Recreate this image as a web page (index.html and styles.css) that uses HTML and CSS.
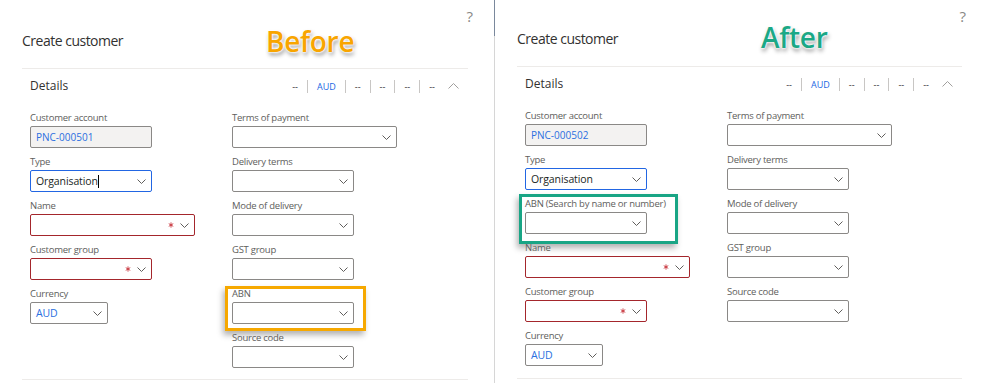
FILE: index.html
```html
<!DOCTYPE html>
<html lang="en">
<head>
  <meta charset="UTF-8" />
  <meta name="viewport" content="width=device-width, initial-scale=1.0"/>
  <title>Create customer - Before / After</title>
  <link rel="stylesheet" href="styles.css">
</head>
<body>
<div class="page">

  <!-- Before -->
  <section class="panel panel-before">
    <div class="topbar"><span class="help">?</span></div>
    <h1 class="title">Create customer</h1>
    <div class="stamp stamp-before">Before</div>

    <div class="card">
      <div class="card-head">
        <h2>Details</h2>
        <div class="summary">
          <span class="sum-item">--</span>
          <span class="sum-item sum-blue">AUD</span>
          <span class="sum-item">--</span>
          <span class="sum-item">--</span>
          <span class="sum-item">--</span>
          <span class="sum-item">--</span>
          <svg class="collapse" viewBox="0 0 11 6"><path d="M0.5 5.5 L5.5 0.5 L10.5 5.5"/></svg>
        </div>
      </div>

      <div class="form">
        <div class="col">
          <div class="field">
            <label>Customer account</label>
            <div class="input w-md readonly"><span class="value blue">PNC-000501</span></div>
          </div>
          <div class="field">
            <label>Type</label>
            <div class="input w-md focused"><span class="value big">Organisation<span class="caret"></span></span>
              <svg class="chev" viewBox="0 0 9 5"><path d="M0.5 0.5 L4.5 4.5 L8.5 0.5"/></svg></div>
          </div>
          <div class="field">
            <label>Name</label>
            <div class="input w-lg required"><span class="value"></span>
              <svg class="req" viewBox="0 0 8 8"><path d="M4 0.5 V7.5 M1 2.2 L7 5.8 M1 5.8 L7 2.2"/></svg>
              <svg class="chev" viewBox="0 0 9 5"><path d="M0.5 0.5 L4.5 4.5 L8.5 0.5"/></svg></div>
          </div>
          <div class="field">
            <label>Customer group</label>
            <div class="input w-md required"><span class="value"></span>
              <svg class="req" viewBox="0 0 8 8"><path d="M4 0.5 V7.5 M1 2.2 L7 5.8 M1 5.8 L7 2.2"/></svg>
              <svg class="chev" viewBox="0 0 9 5"><path d="M0.5 0.5 L4.5 4.5 L8.5 0.5"/></svg></div>
          </div>
          <div class="field">
            <label>Currency</label>
            <div class="input w-sm"><span class="value big blue">AUD</span>
              <svg class="chev" viewBox="0 0 9 5"><path d="M0.5 0.5 L4.5 4.5 L8.5 0.5"/></svg></div>
          </div>
        </div>

        <div class="col">
          <div class="field">
            <label>Terms of payment</label>
            <div class="input w-lg"><span class="value"></span>
              <svg class="chev" viewBox="0 0 9 5"><path d="M0.5 0.5 L4.5 4.5 L8.5 0.5"/></svg></div>
          </div>
          <div class="field">
            <label>Delivery terms</label>
            <div class="input w-md"><span class="value"></span>
              <svg class="chev" viewBox="0 0 9 5"><path d="M0.5 0.5 L4.5 4.5 L8.5 0.5"/></svg></div>
          </div>
          <div class="field">
            <label>Mode of delivery</label>
            <div class="input w-md"><span class="value"></span>
              <svg class="chev" viewBox="0 0 9 5"><path d="M0.5 0.5 L4.5 4.5 L8.5 0.5"/></svg></div>
          </div>
          <div class="field">
            <label>GST group</label>
            <div class="input w-md"><span class="value"></span>
              <svg class="chev" viewBox="0 0 9 5"><path d="M0.5 0.5 L4.5 4.5 L8.5 0.5"/></svg></div>
          </div>
          <div class="field mark mark-orange">
            <label>ABN</label>
            <div class="input w-md"><span class="value"></span>
              <svg class="chev" viewBox="0 0 9 5"><path d="M0.5 0.5 L4.5 4.5 L8.5 0.5"/></svg></div>
          </div>
          <div class="field">
            <label>Source code</label>
            <div class="input w-md"><span class="value"></span>
              <svg class="chev" viewBox="0 0 9 5"><path d="M0.5 0.5 L4.5 4.5 L8.5 0.5"/></svg></div>
          </div>
        </div>
      </div>
    </div>
  </section>

  <!-- After -->
  <section class="panel panel-after">
    <div class="topbar"><span class="help">?</span></div>
    <h1 class="title">Create customer</h1>
    <div class="stamp stamp-after">After</div>

    <div class="card">
      <div class="card-head">
        <h2>Details</h2>
        <div class="summary">
          <span class="sum-item">--</span>
          <span class="sum-item sum-blue">AUD</span>
          <span class="sum-item">--</span>
          <span class="sum-item">--</span>
          <span class="sum-item">--</span>
          <span class="sum-item">--</span>
          <svg class="collapse" viewBox="0 0 11 6"><path d="M0.5 5.5 L5.5 0.5 L10.5 5.5"/></svg>
        </div>
      </div>

      <div class="form">
        <div class="col">
          <div class="field">
            <label>Customer account</label>
            <div class="input w-md readonly"><span class="value blue">PNC-000502</span></div>
          </div>
          <div class="field">
            <label>Type</label>
            <div class="input w-md focused"><span class="value big">Organisation</span>
              <svg class="chev" viewBox="0 0 9 5"><path d="M0.5 0.5 L4.5 4.5 L8.5 0.5"/></svg></div>
          </div>
          <div class="field mark mark-green">
            <label>ABN (Search by name or number)</label>
            <div class="input w-md"><span class="value"></span>
              <svg class="chev" viewBox="0 0 9 5"><path d="M0.5 0.5 L4.5 4.5 L8.5 0.5"/></svg></div>
          </div>
          <div class="field">
            <label>Name</label>
            <div class="input w-lg required"><span class="value"></span>
              <svg class="req" viewBox="0 0 8 8"><path d="M4 0.5 V7.5 M1 2.2 L7 5.8 M1 5.8 L7 2.2"/></svg>
              <svg class="chev" viewBox="0 0 9 5"><path d="M0.5 0.5 L4.5 4.5 L8.5 0.5"/></svg></div>
          </div>
          <div class="field">
            <label>Customer group</label>
            <div class="input w-md required"><span class="value"></span>
              <svg class="req" viewBox="0 0 8 8"><path d="M4 0.5 V7.5 M1 2.2 L7 5.8 M1 5.8 L7 2.2"/></svg>
              <svg class="chev" viewBox="0 0 9 5"><path d="M0.5 0.5 L4.5 4.5 L8.5 0.5"/></svg></div>
          </div>
          <div class="field">
            <label>Currency</label>
            <div class="input w-sm"><span class="value big blue">AUD</span>
              <svg class="chev" viewBox="0 0 9 5"><path d="M0.5 0.5 L4.5 4.5 L8.5 0.5"/></svg></div>
          </div>
        </div>

        <div class="col">
          <div class="field">
            <label>Terms of payment</label>
            <div class="input w-lg"><span class="value"></span>
              <svg class="chev" viewBox="0 0 9 5"><path d="M0.5 0.5 L4.5 4.5 L8.5 0.5"/></svg></div>
          </div>
          <div class="field">
            <label>Delivery terms</label>
            <div class="input w-md"><span class="value"></span>
              <svg class="chev" viewBox="0 0 9 5"><path d="M0.5 0.5 L4.5 4.5 L8.5 0.5"/></svg></div>
          </div>
          <div class="field">
            <label>Mode of delivery</label>
            <div class="input w-md"><span class="value"></span>
              <svg class="chev" viewBox="0 0 9 5"><path d="M0.5 0.5 L4.5 4.5 L8.5 0.5"/></svg></div>
          </div>
          <div class="field">
            <label>GST group</label>
            <div class="input w-md"><span class="value"></span>
              <svg class="chev" viewBox="0 0 9 5"><path d="M0.5 0.5 L4.5 4.5 L8.5 0.5"/></svg></div>
          </div>
          <div class="field">
            <label>Source code</label>
            <div class="input w-md"><span class="value"></span>
              <svg class="chev" viewBox="0 0 9 5"><path d="M0.5 0.5 L4.5 4.5 L8.5 0.5"/></svg></div>
          </div>
        </div>
      </div>
    </div>
  </section>

</div>
</body>
</html>
```

FILE: styles.css
```css
body {
  margin: 0;
  background: #fff;
  font-family: "Segoe UI", "Open Sans", sans-serif;
  color: #323130;
}
.page {
  display: flex;
  width: 982px;
  height: 383px;
  overflow: hidden;
}
.panel {
  position: relative;
  box-sizing: border-box;
}
.panel-before {
  width: 494px;
}
.panel-after {
  width: 488px;
  border-left: 1px solid #d6d6d6;
}
.panel-after::before {
  content: "";
  position: absolute;
  left: -1px;
  top: 0;
  width: 1px;
  height: 36px;
  background: #7a889c;
}

/* header */
.topbar {
  height: 28px;
  display: flex;
  justify-content: flex-end;
  padding-right: 21px;
}
.panel-after .topbar {
  height: 26px;
  padding-right: 16px;
}
.help {
  font-size: 15px;
  line-height: 16px;
  margin-top: 8px;
  color: #8a8886;
}
.title {
  margin: 3px 0 17px 22px;
  font-size: 14px;
  line-height: 20px;
  font-weight: 400;
  letter-spacing: -0.5px;
  color: #323130;
}

/* the Before / After labels */
.stamp {
  position: absolute;
  left: 266px;
  font-family: "Open Sans", sans-serif;
  font-size: 28px;
  line-height: 30px;
  font-weight: 600;
  letter-spacing: -0.3px;
  text-shadow:
    0 0 2px #fff, 0 0 2px #fff, 0 0 3px #fff,
    1px 3px 4px rgba(0, 0, 0, 0.45);
}
.stamp-before {
  top: 26px;
  color: #f8a500;
}
.stamp-after {
  top: 22px;
  color: #1ba886;
}

/* card */
.card {
  margin: 0 26px 0 22px;
  border-top: 1px solid #edebe9;
  border-bottom: 1px solid #edebe9;
  padding-bottom: 4px;
}
.panel-after .card {
  margin-right: 20px;
  padding-bottom: 5px;
}
.card-head {
  display: flex;
  justify-content: space-between;
  align-items: center;
  padding: 8px 9px 16px 8px;
}
.card-head h2 {
  margin: 0;
  font-size: 12px;
  line-height: 18px;
  font-weight: 400;
  color: #323130;
}
.summary {
  display: flex;
  align-items: center;
  font-size: 9px;
  line-height: 13px;
  color: #323130;
}
.sum-item {
  padding: 0 9px;
  border-left: 1px solid #c8c6c4;
}
.sum-item:first-child {
  border-left: none;
}
.sum-blue {
  color: #2266e3;
}
.collapse {
  width: 11px;
  height: 6px;
  margin-left: 4px;
  fill: none;
  stroke: #a19f9d;
  stroke-width: 1;
}

/* form */
.form {
  display: flex;
  padding-left: 8px;
}
.col {
  width: 202px;
}
.col + .col {
  flex: 1;
}
.field {
  position: relative;
  width: fit-content;
  margin-bottom: 7px;
}
.field label {
  display: block;
  font-size: 9.5px;
  line-height: 14px;
  letter-spacing: -0.25px;
  color: #605e5c;
  margin-bottom: 1px;
  white-space: nowrap;
}
.input {
  display: flex;
  align-items: center;
  box-sizing: border-box;
  height: 22px;
  padding: 0 5px;
  border: 1px solid #8a8886;
  border-radius: 2px;
  background: #fff;
}
.w-sm { width: 78px; }
.w-md { width: 122px; }
.w-lg { width: 165px; }
.readonly {
  background: #f3f2f1;
}
.focused {
  border-color: #2266e3;
}
.required {
  border-color: #a4262c;
}
.value {
  flex: 1;
  font-size: 10px;
  color: #201f1e;
  white-space: nowrap;
}
.value.big {
  font-size: 10.5px;
  letter-spacing: -0.1px;
}
.value.blue {
  color: #2b6fe0;
}
.caret {
  display: inline-block;
  width: 1px;
  height: 13px;
  background: #000;
  vertical-align: -3px;
}
.chev {
  width: 9px;
  height: 5px;
  fill: none;
  stroke: #605e5c;
  stroke-width: 1;
}
.req {
  width: 6px;
  height: 6px;
  margin-right: 6px;
  fill: none;
  stroke: #c4262e;
  stroke-width: 1.1;
}

/* annotation boxes */
.mark::after {
  content: "";
  position: absolute;
  border: 3px solid;
  box-shadow: -2px 4px 6px rgba(0, 0, 0, 0.3);
  pointer-events: none;
}
.mark-orange::after {
  inset: -1px -12px -7px -7px;
  border-color: #f6a800;
}
.mark-green::after {
  inset: -3px -12px -10px -6px;
  border-color: #19a585;
}
```
